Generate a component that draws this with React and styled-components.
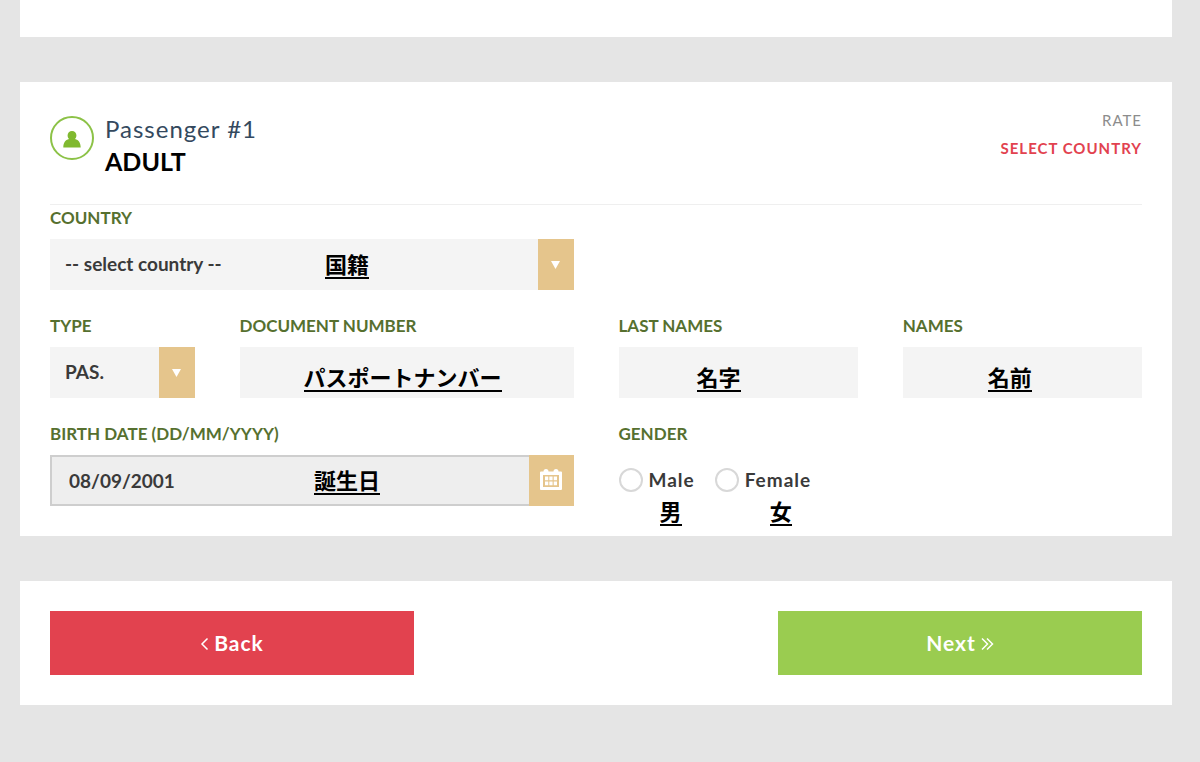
// src/App.jsx
import React, { useState } from 'react';
import styled, { createGlobalStyle } from 'styled-components';

export default function App() {
    const [country, setCountry] = useState('');
    const [docType, setDocType] = useState('pas');
    const [gender, setGender] = useState('');

    return (
        <Page>
            <GlobalStyle />
            <PreviousPanel />

            <Panel>
                <Header>
                    <Badge>
                        <UserIcon />
                    </Badge>
                    <Titles>
                        <PassengerName>Passenger #1</PassengerName>
                        <PassengerKind>ADULT</PassengerKind>
                    </Titles>
                    <Rate>
                        <RateLabel>RATE</RateLabel>
                        <RateValue>SELECT COUNTRY</RateValue>
                    </Rate>
                </Header>

                <Grid>
                    <Field $span={6}>
                        <Label htmlFor="country">COUNTRY</Label>
                        <Control>
                            <SelectBox>
                                <Select id="country" value={country} onChange={e => setCountry(e.target.value)}>
                                    <option value="">-- select country --</option>
                                    <option value="jp">Japan</option>
                                    <option value="pe">Peru</option>
                                </Select>
                                <Arrow />
                            </SelectBox>
                            <Note $left={275} $top={11}>国籍</Note>
                        </Control>
                    </Field>
                    <Field $span={2} $start={1}>
                        <Label htmlFor="type">TYPE</Label>
                        <SelectBox>
                            <Select id="type" value={docType} onChange={e => setDocType(e.target.value)}>
                                <option value="pas">PAS.</option>
                                <option value="dni">DNI</option>
                            </Select>
                            <Arrow />
                        </SelectBox>
                    </Field>
                    <Field $span={4}>
                        <Label htmlFor="document">DOCUMENT NUMBER</Label>
                        <Control>
                            <Input id="document" type="text" />
                            <Note $left={64} $top={16}>パスポートナンバー</Note>
                        </Control>
                    </Field>
                    <Field $span={3}>
                        <Label htmlFor="lastNames">LAST NAMES</Label>
                        <Control>
                            <Input id="lastNames" type="text" />
                            <Note $left={78} $top={16}>名字</Note>
                        </Control>
                    </Field>
                    <Field $span={3}>
                        <Label htmlFor="names">NAMES</Label>
                        <Control>
                            <Input id="names" type="text" />
                            <Note $left={85} $top={16}>名前</Note>
                        </Control>
                    </Field>
                    <Field $span={6}>
                        <Label htmlFor="birth">BIRTH DATE (DD/MM/YYYY)</Label>
                        <Control>
                            <DateBox>
                                <DateInput id="birth" type="text" defaultValue="08/09/2001" />
                                <DateButton type="button" aria-label="Calendar">
                                    <CalendarIcon />
                                </DateButton>
                            </DateBox>
                            <Note $left={264} $top={11}>誕生日</Note>
                        </Control>
                    </Field>
                    <GenderField>
                        <Legend>GENDER</Legend>
                        <Options>
                            <Option>
                                <Radio name="gender" checked={gender === 'm'} onChange={() => setGender('m')} />
                                Male
                                <Note $left={41} $top={29}>男</Note>
                            </Option>
                            <Option>
                                <Radio name="gender" checked={gender === 'f'} onChange={() => setGender('f')} />
                                Female
                                <Note $left={55} $top={29}>女</Note>
                            </Option>
                        </Options>
                    </GenderField>
                </Grid>
            </Panel>

            <Actions>
                <ActionButton type="button" $color="#e2424f">
                    <svg width="9" height="16" viewBox="0 0 9 16">
                        <path d="M7.500 3.500 2 9l5.500 5.500" />
                    </svg>
                    Back
                </ActionButton>
                <ActionButton type="button" $color="#9acc50">
                    Next
                    <svg width="13" height="16" viewBox="0 0 13 16">
                        <path d="M1 3.500 6.500 9 1 14.500M6 3.500 11.500 9 6 14.500" />
                    </svg>
                </ActionButton>
            </Actions>
        </Page>
    );
}

function UserIcon() {
    return (
        <svg width="18" height="17" viewBox="0 0 18 17" fill="#80b92f">
            <path d="M9 0a4.400 4.400 0 0 1 4.400 4.600c0 1.600-.6 2.700-1.400 3.500 3.700.9 5.600 3.700 5.700 8.500H.3C.4 11.800 2.300 9 6 8.100 5.200 7.300 4.600 6.200 4.600 4.600A4.400 4.400 0 0 1 9 0z" />
        </svg>
    );
}

function Arrow() {
    return (
        <ArrowCell>
            <svg width="9" height="8" viewBox="0 0 9 8" fill="#fff">
                <path d="M0 0h9L4.500 8z" />
            </svg>
        </ArrowCell>
    );
}

function CalendarIcon() {
    return (
        <svg width="22" height="21" viewBox="0 0 22 21">
            <path fill="#fff" d="M1 2.500h2.500a2.500 2.500 0 0 1 5 0h5a2.500 2.500 0 0 1 5 0H21a1 1 0 0 1 1 1V20a1 1 0 0 1-1 1H1a1 1 0 0 1-1-1V3.500a1 1 0 0 1 1-1z" />
            <path fill="#e5c58c" d="M3 6h16v12H3z" />
            <path fill="#fff" d="M5 7.500h3.300v3.800H5zm4.300 0h3.300v3.800H9.300zm4.400 0H17v3.800h-3.300zM5 12.500h3.300v3.800H5zm4.300 0h3.300v3.800H9.300zm4.400 0H17v3.800h-3.300z" />
        </svg>
    );
}

/* ========== styled-components ========== */

const GlobalStyle = createGlobalStyle`
  * { box-sizing: border-box; }
  body {
    margin: 0;
    background: #e5e5e5;
    font-family: Lato, 'Noto Sans CJK JP', sans-serif;
  }
  button, input, select { font-family: inherit; }
`;

const Page = styled.main`
  display: flex; flex-direction: column; gap: 45px;
  padding: 0 28px 57px 20px;
`;

const PreviousPanel = styled.section`
  height: 37px;
  background: #fff;
`;

const Panel = styled.section`
  padding: 0 30px 30px;
  background: #fff;
`;

const Header = styled.header`
  display: flex; align-items: flex-start; gap: 11px;
  height: 123px;
  padding-top: 24px;
  border-bottom: 1px solid #efefef;
`;
const Badge = styled.div`
  display: flex; align-items: center; justify-content: center;
  width: 44px; height: 44px;
  margin-top: 10px; padding-top: 2px;
  border: 2px solid #8cc247; border-radius: 50%;
`;
const Titles = styled.div`
  flex: 1;
  padding-top: 7px;
`;
const PassengerName = styled.div`
  color: #34495e;
  font-size: 24px; line-height: 31px; letter-spacing: 1px;
`;
const PassengerKind = styled.div`
  color: #000;
  font-size: 25px; line-height: 34px; font-weight: 700;
`;
const Rate = styled.div`
  font-size: 15px; line-height: 28px; letter-spacing: 1px;
  text-align: right;
`;
const RateLabel = styled.div`
  color: #8c8c8c;
`;
const RateValue = styled.div`
  color: #e2424f; font-weight: 700;
`;

const Grid = styled.div`
  display: grid;
  grid-template-columns: repeat(12, minmax(0, 1fr));
  gap: 23px 45px;
`;

const Field = styled.div`
  grid-column: ${p => (p.$start ? `${p.$start} / ` : '')}span ${p => p.$span};
`;
const Label = styled.label`
  display: block;
  margin-bottom: 8px;
  color: #56702f;
  font-size: 17px; line-height: 26px; font-weight: 700;
`;

const Control = styled.div`
  position: relative;
`;
const Note = styled.span`
  position: absolute; left: ${p => p.$left}px; top: ${p => p.$top}px;
  border-bottom: 2px solid #000;
  color: #000;
  font-family: 'Noto Sans CJK JP', sans-serif;
  font-size: 22px; line-height: 27px; font-weight: 700;
  letter-spacing: 0;
  white-space: nowrap;
  pointer-events: none;
`;

const Input = styled.input`
  display: block;
  width: 100%; height: 51px;
  padding: 0 15px;
  border: 0; border-radius: 0;
  background: #f4f4f4; color: #3a3a3a;
  font-size: 19px; font-weight: 700;
`;

const SelectBox = styled.div`
  display: grid;
  grid-template-columns: 1fr 36px;
`;
const Select = styled.select`
  grid-area: 1 / 1 / 2 / 3;
  appearance: none;
  height: 51px;
  padding: 0 51px 3px 15px;
  border: 0; border-radius: 0;
  background: #f4f4f4; color: #3a3a3a;
  font-size: 19px; font-weight: 700;
`;
const ArrowCell = styled.span`
  grid-area: 1 / 2;
  display: flex; align-items: center; justify-content: center;
  background: #e5c58c;
  pointer-events: none;
`;

const DateBox = styled.div`
  display: flex;
`;
const DateInput = styled(Input)`
  flex: 1; width: auto; min-width: 0;
  padding: 0 17px;
  border: 2px solid #cecece; border-right: 0;
  background: #eee;
`;
const DateButton = styled.button`
  display: flex; align-items: center; justify-content: center;
  width: 45px; height: 51px;
  padding: 0 0 2px;
  border: 0;
  background: #e5c58c;
  cursor: pointer;
`;

const GenderField = styled.fieldset`
  grid-column: span 6;
  min-width: 0;
  margin: 0; padding: 0;
  border: 0;
`;
const Legend = styled.legend`
  margin-bottom: 8px; padding: 0;
  color: #56702f;
  font-size: 17px; line-height: 26px; font-weight: 700;
`;
const Options = styled.div`
  display: flex; align-items: center; gap: 20px;
  height: 50px;
`;
const Option = styled.label`
  position: relative;
  display: flex; align-items: center; gap: 6px;
  color: #3a3a3a;
  font-size: 19px; line-height: 24px; font-weight: 700; letter-spacing: 1px;
  cursor: pointer;
`;
const Radio = styled.input.attrs({ type: 'radio' })`
  appearance: none;
  width: 24px; height: 24px;
  margin: 0;
  border: 2px solid #d8d8d8; border-radius: 50%;
  background: #fff;
  &:checked { background: radial-gradient(#80b92f 45%, #fff 50%); }
`;

const Actions = styled.nav`
  display: grid;
  grid-template-columns: 1fr 1fr 1fr;
  padding: 30px;
  background: #fff;
  & > :last-child { grid-column: 3; }
`;
const ActionButton = styled.button`
  display: flex; align-items: center; justify-content: center; gap: 5px;
  height: 64px;
  padding-bottom: 2px;
  border: 0;
  background: ${p => p.$color}; color: #fff;
  font-size: 21px; font-weight: 700; letter-spacing: 1px;
  cursor: pointer;
  svg { fill: none; stroke: #fff; stroke-width: 1.5; }
`;
